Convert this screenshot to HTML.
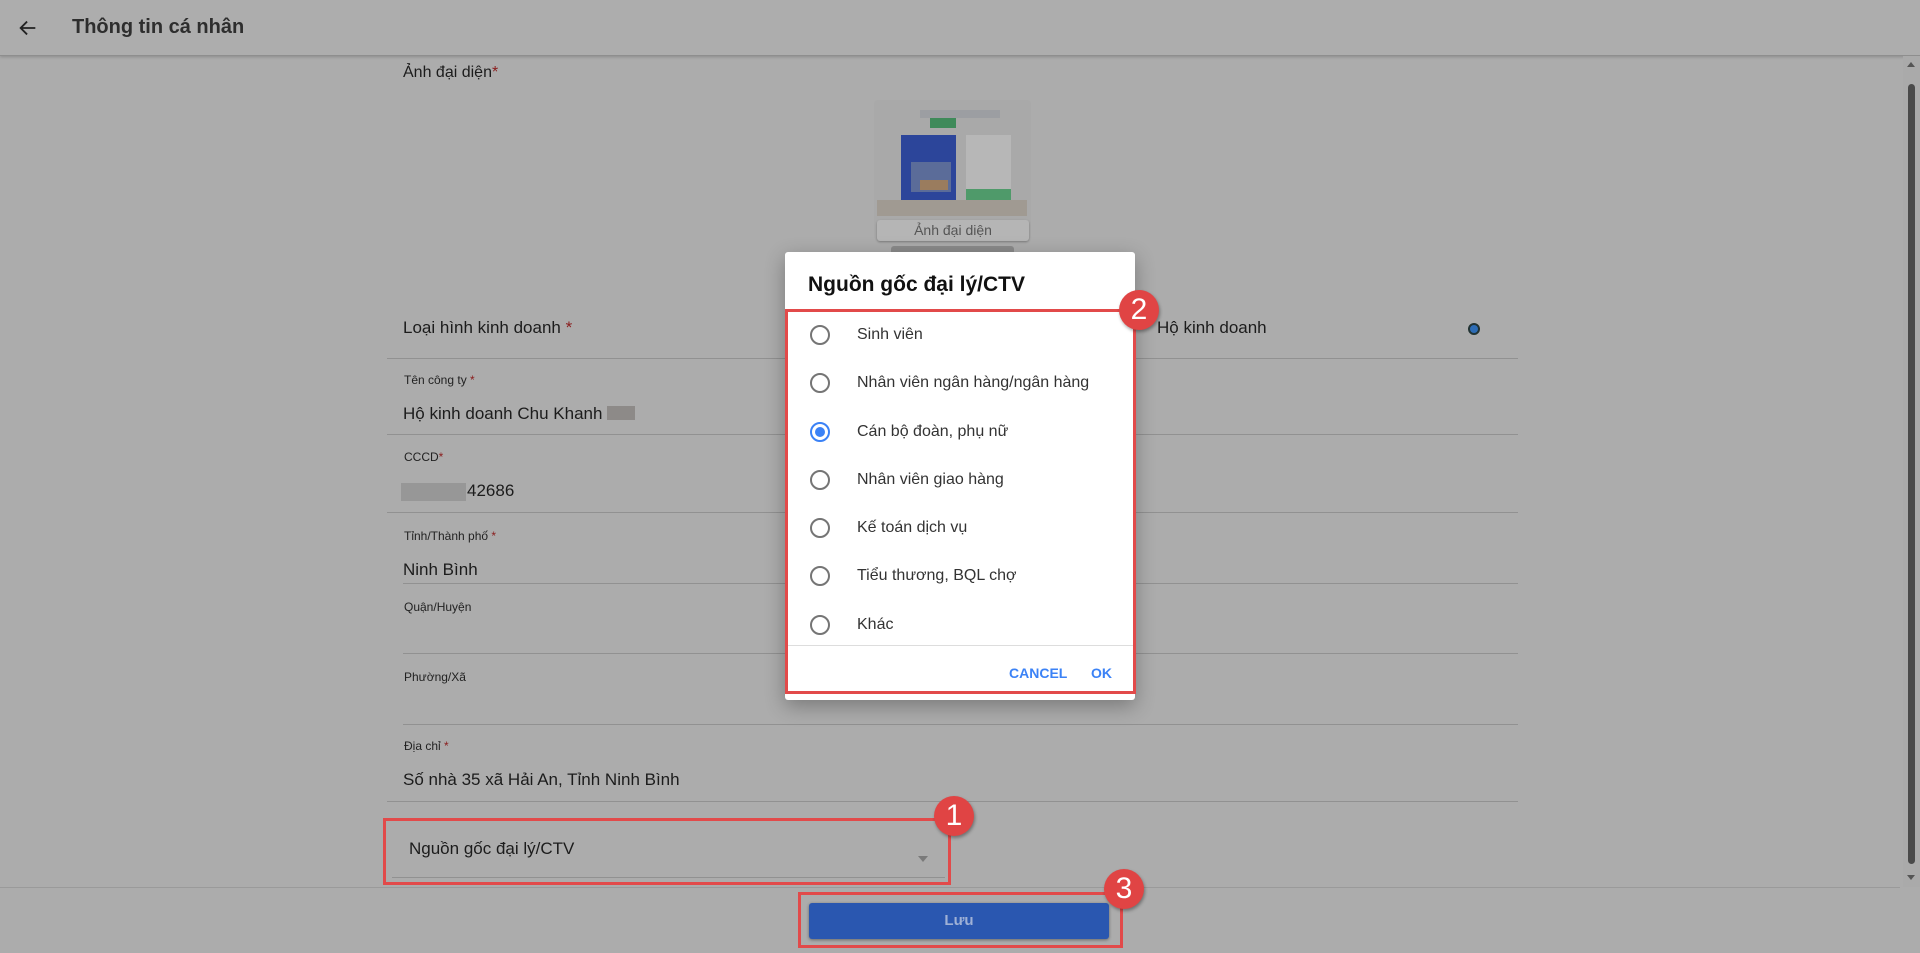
<!DOCTYPE html>
<html><head><meta charset="utf-8">
<style>
*{margin:0;padding:0;box-sizing:border-box}
body{width:1920px;height:953px;overflow:hidden;background:#acacac;font-family:"Liberation Sans",sans-serif;color:#1c1c1c;position:relative}
.a{position:absolute;white-space:nowrap}
.hdr{left:0;top:0;width:1920px;height:56px;background:#adadad;border-bottom:1px solid #8e8e8e;box-shadow:0 1px 3px rgba(0,0,0,.2)}
.lbl{font-size:12px;color:#222}
.val{font-size:17px;color:#1c1c1c}
.req{color:#8a1c1c}
.line{height:1px;background:#919191}
.rb{position:absolute;width:20px;height:20px;border:2px solid #757575;border-radius:50%}
.opt{position:absolute;left:72px;font-size:16px;color:#333}
.red{position:absolute;border:3px solid #e24a4a}
.badge{position:absolute;width:40px;height:40px;border-radius:50%;background:#e04444;color:#fff;font-size:30px;text-align:center;line-height:40px;box-shadow:1px 2px 3px rgba(0,0,0,.35)}
.px{position:absolute}
</style></head><body>
<div class="a hdr"></div>
<svg class="a" style="left:17px;top:17px" width="22" height="22" viewBox="0 0 24 24"><path d="M20 12H5M11 5l-7 7 7 7" stroke="#222" stroke-width="2" fill="none"/></svg>
<div class="a" style="left:72px;top:16px;font-size:20px;font-weight:bold;color:#2e2e2e">Thông tin cá nhân</div>

<div class="a" style="left:403px;top:64px;font-size:16px">Ảnh đại diện<span class="req">*</span></div>

<div class="a" style="left:874px;top:100px;width:157px;height:140px;background:#a9a9a9;border-radius:4px"></div>
<div class="px" style="left:920px;top:110px;width:80px;height:8px;background:#9c9ea2"></div>
<div class="px" style="left:930px;top:118px;width:26px;height:10px;background:#3f8a5a"></div>
<div class="px" style="left:901px;top:135px;width:55px;height:70px;background:#2c459a"></div>
<div class="px" style="left:911px;top:162px;width:40px;height:30px;background:#5b6c99"></div>
<div class="px" style="left:920px;top:180px;width:28px;height:10px;background:#9a7c5e"></div>
<div class="px" style="left:966px;top:135px;width:45px;height:55px;background:#b7b7b7"></div>
<div class="px" style="left:966px;top:189px;width:45px;height:18px;background:#4f9a6a"></div>
<div class="px" style="left:877px;top:200px;width:150px;height:16px;background:#a09a92"></div>
<div class="a" style="left:877px;top:220px;width:152px;height:21px;background:#b5b5b5;border-radius:3px;box-shadow:0 1px 2px rgba(0,0,0,.3);font-size:14px;color:#555;text-align:center;line-height:21px">Ảnh đại diện</div>
<div class="a" style="left:891px;top:246px;width:123px;height:8px;background:#8a8a8a;border-radius:3px 3px 0 0"></div>

<div class="a val" style="left:403px;top:318px">Loại hình kinh doanh <span class="req">*</span></div>
<div class="a val" style="left:1157px;top:318px">Hộ kinh doanh</div>
<div class="a" style="left:1468px;top:323px;width:12px;height:12px;border-radius:50%;background:#2d6cb5;border:2px solid #233"></div>
<div class="a line" style="left:387px;top:358px;width:1131px"></div>

<div class="a lbl" style="left:404px;top:373px">Tên công ty <span class="req">*</span></div>
<div class="a val" style="left:403px;top:404px">Hộ kinh doanh Chu Khanh <span style="display:inline-block;width:28px;height:14px;background:#8d8a88;vertical-align:-1px"></span></div>
<div class="a line" style="left:387px;top:434px;width:1131px"></div>

<div class="a lbl" style="left:404px;top:450px">CCCD<span class="req">*</span></div>
<div class="a" style="left:401px;top:483px;width:65px;height:18px;background:#979797"></div>
<div class="a val" style="left:467px;top:481px">42686</div>
<div class="a line" style="left:387px;top:512px;width:1131px"></div>

<div class="a lbl" style="left:404px;top:529px">Tỉnh/Thành phố <span class="req">*</span></div>
<div class="a val" style="left:403px;top:560px">Ninh Bình</div>
<div class="a line" style="left:403px;top:583px;width:1115px"></div>

<div class="a lbl" style="left:404px;top:600px">Quận/Huyện</div>
<div class="a line" style="left:403px;top:653px;width:1115px"></div>
<div class="a lbl" style="left:404px;top:670px">Phường/Xã</div>
<div class="a line" style="left:403px;top:724px;width:1115px"></div>

<div class="a lbl" style="left:404px;top:739px">Địa chỉ <span class="req">*</span></div>
<div class="a val" style="left:403px;top:770px">Số nhà 35 xã Hải An, Tỉnh Ninh Bình</div>
<div class="a line" style="left:387px;top:801px;width:1131px"></div>

<div class="a val" style="left:409px;top:839px">Nguồn gốc đại lý/CTV</div>
<div class="a" style="left:918px;top:856px;width:0;height:0;border-left:5px solid transparent;border-right:5px solid transparent;border-top:6px solid #7a7a7a"></div>
<div class="a line" style="left:392px;top:877px;width:553px"></div>

<div class="a" style="left:0;top:887px;width:1900px;height:1px;background:#9a9a9a"></div>
<div class="a" style="left:809px;top:903px;width:300px;height:36px;background:#2a57b0;border-radius:3px;box-shadow:0 1px 3px rgba(0,0,0,.4);color:#9fb1d6;font-size:15px;font-weight:bold;text-align:center;line-height:36px">Lưu</div>

<div class="a" style="left:1903px;top:56px;width:17px;height:831px;background:#aaaaaa"></div>
<div class="a" style="left:1908px;top:84px;width:7px;height:780px;background:#4a4a4a;border-radius:4px"></div>
<div class="a" style="left:1907px;top:62px;width:0;height:0;border-left:4px solid transparent;border-right:4px solid transparent;border-bottom:5px solid #555"></div>
<div class="a" style="left:1907px;top:875px;width:0;height:0;border-left:4px solid transparent;border-right:4px solid transparent;border-top:5px solid #555"></div>

<div class="a" style="left:785px;top:252px;width:350px;height:448px;background:#fff;border-radius:3px;box-shadow:0 6px 20px rgba(0,0,0,.3)">
  <div class="a" style="left:23px;top:21px;font-size:21px;font-weight:bold;color:#111">Nguồn gốc đại lý/CTV</div>
  <div class="rb" style="left:25px;top:73px"></div><div class="opt" style="top:74px">Sinh viên</div>
  <div class="rb" style="left:25px;top:121px"></div><div class="opt" style="top:122px">Nhân viên ngân hàng/ngân hàng</div>
  <div class="rb" style="left:25px;top:170px;border-color:#3b82f6"><div style="position:absolute;left:3px;top:3px;width:10px;height:10px;border-radius:50%;background:#3b82f6"></div></div><div class="opt" style="top:171px">Cán bộ đoàn, phụ nữ</div>
  <div class="rb" style="left:25px;top:218px"></div><div class="opt" style="top:219px">Nhân viên giao hàng</div>
  <div class="rb" style="left:25px;top:266px"></div><div class="opt" style="top:267px">Kế toán dịch vụ</div>
  <div class="rb" style="left:25px;top:314px"></div><div class="opt" style="top:315px">Tiểu thương, BQL chợ</div>
  <div class="rb" style="left:25px;top:363px"></div><div class="opt" style="top:364px">Khác</div>
  <div class="a" style="left:0;top:393px;width:350px;height:1px;background:#ddd"></div>
  <div class="a" style="left:224px;top:413px;font-size:14px;font-weight:bold;color:#3b82f6">CANCEL</div>
  <div class="a" style="left:306px;top:413px;font-size:14px;font-weight:bold;color:#3b82f6">OK</div>
</div>

<div class="red" style="left:785px;top:309px;width:351px;height:385px"></div>
<div class="red" style="left:383px;top:818px;width:568px;height:67px"></div>
<div class="red" style="left:798px;top:892px;width:325px;height:56px"></div>
<div class="badge" style="left:1119px;top:290px">2</div>
<div class="badge" style="left:934px;top:796px">1</div>
<div class="badge" style="left:1104px;top:869px">3</div>
</body></html>
